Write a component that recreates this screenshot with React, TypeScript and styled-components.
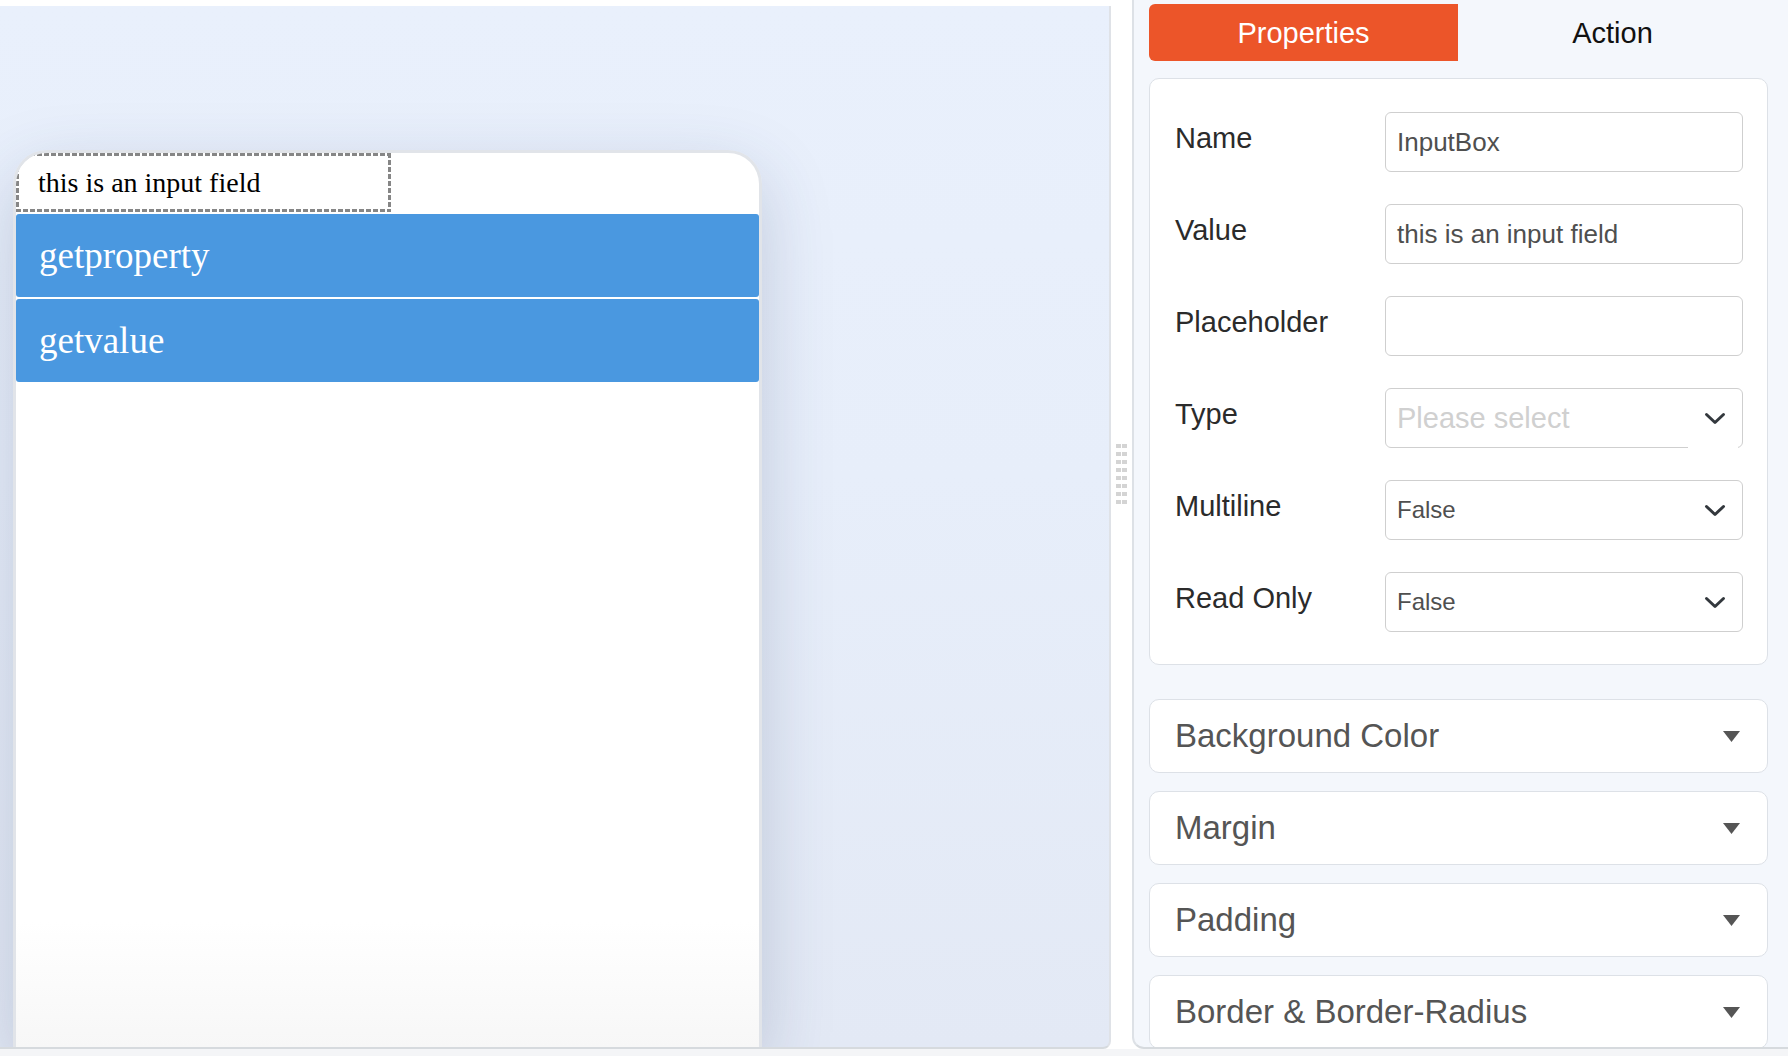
import React from "react";
import styled, { createGlobalStyle } from "styled-components";

const Global = createGlobalStyle`
  html, body { margin: 0; padding: 0; background: #fff; }
  body { font-family: "Liberation Sans", Arial, sans-serif; }
  * { box-sizing: border-box; }
`;

const Page = styled.div`
  width: 1788px;
  height: 1056px;
  display: flex;
  flex-direction: column;
  background: #f4f5f7;
  overflow: hidden;
`;

const Main = styled.div`
  display: flex;
  height: 1049px;
  background: #fff;
`;

const Canvas = styled.div`
  width: 1111px;
  margin-top: 6px;
  height: 1043px;
  background: linear-gradient(180deg, #e9f0fc 0%, #e7eefa 45%, #e3e9f5 100%);
  border-right: 2px solid #dfe2e7;
  border-bottom: 2px solid #d6dade;
  border-bottom-right-radius: 8px;
  padding: 144px 0 0 13px;
  display: flex;
  overflow: hidden;
`;

const Phone = styled.div`
  width: 749px;
  display: flex;
  flex-direction: column;
  border: 3px solid #e1e4e9;
  border-bottom: none;
  border-radius: 34px 34px 0 0;
  background: linear-gradient(180deg, #ffffff 0%, #ffffff 86%, #f7f7f7 100%);
  box-shadow: 0 24px 70px rgba(50, 70, 110, 0.22);
  overflow: hidden;
`;

const dash = (dir: string) =>
  `repeating-linear-gradient(${dir}, #868686 0 5px, transparent 5px 7px)`;

const FieldPreview = styled.div`
  width: 375px;
  height: 59px;
  padding-left: 22px;
  display: flex;
  align-items: center;
  font-family: "Liberation Serif", "Times New Roman", serif;
  font-size: 28px;
  color: #000;
  background:
    ${dash("90deg")} top / 100% 3px no-repeat,
    ${dash("90deg")} bottom / 100% 3px no-repeat,
    ${dash("180deg")} left / 3px 100% no-repeat,
    ${dash("180deg")} right / 3px 100% no-repeat,
    #fff;
`;

const ActionBar = styled.div`
  height: 83px;
  margin-top: 2px;
  background: #4a98e0;
  border-radius: 3px;
  padding-left: 23px;
  display: flex;
  align-items: center;
  font-family: "Liberation Serif", "Times New Roman", serif;
  font-size: 37px;
  color: #fff;
`;

const Gutter = styled.div`
  width: 21px;
  display: flex;
  justify-content: center;
  padding-top: 444px;
`;

const Handle = styled.div`
  display: grid;
  grid-template-columns: 5px 5px;
  grid-auto-rows: 4px;
  column-gap: 1px;
  row-gap: 4px;
  height: max-content;
`;

const Dot = styled.span`
  display: block;
  background: #d4d4d4;
`;

const Panel = styled.div`
  flex: 1;
  height: 1049px;
  background: #f4f7fc;
  border-left: 2px solid #dde1e6;
  border-bottom: 2px solid #d6dade;
  border-bottom-left-radius: 12px;
  padding: 4px 20px 0 15px;
  overflow: hidden;
`;

const Tabs = styled.div`
  display: flex;
  height: 57px;
`;

const Tab = styled.div<{ $active?: boolean }>`
  width: 309px;
  display: flex;
  align-items: center;
  justify-content: center;
  font-size: 29px;
  padding-top: 2px;
  color: ${(p) => (p.$active ? "#fff" : "#111")};
  background: ${(p) => (p.$active ? "#ec5529" : "transparent")};
  border-radius: 6px 0 0 6px;
`;

const Card = styled.div`
  margin-top: 17px;
  background: #fff;
  border: 1px solid #dde1e7;
  border-radius: 10px;
  padding: 33px 24px 32px 25px;
  display: flex;
  flex-direction: column;
  gap: 32px;
`;

const Row = styled.div`
  display: grid;
  grid-template-columns: 1fr 358px;
  align-items: start;
`;

const Label = styled.div`
  font-size: 29px;
  line-height: 52px;
  color: #2b2b2b;
`;

const Field = styled.div<{ $placeholder?: boolean; $size?: number; $gapEdge?: boolean }>`
  position: relative;
  height: 60px;
  border: 1px solid #cfcfcf;
  border-radius: 6px;
  padding: 0 16px 0 11px;
  display: flex;
  align-items: center;
  justify-content: space-between;
  font-size: ${(p) => p.$size ?? 26}px;
  color: ${(p) => (p.$placeholder ? "#d0d0d0" : "#4f4f4f")};
  background: #fff;
  ${(p) =>
    p.$gapEdge
      ? `&::after { content: ""; position: absolute; right: 4px; bottom: -1px; width: 50px; height: 2px; background: #fff; }`
      : ""}
`;

const SelectValue = styled.span``;

const Chevron = () => (
  <svg width="22" height="13" viewBox="0 0 22 13" fill="none">
    <polyline points="2.5,2.5 11,10.5 19.5,2.5" stroke="#33383d" strokeWidth="3" strokeLinecap="round" strokeLinejoin="round" />
  </svg>
);

const Sections = styled.div`
  margin-top: 34px;
  display: flex;
  flex-direction: column;
  gap: 18px;
`;

const Section = styled.div`
  height: 74px;
  flex-shrink: 0;
  background: #fff;
  border: 1px solid #dde1e7;
  border-radius: 10px;
  padding: 0 27px 0 25px;
  display: flex;
  align-items: center;
  justify-content: space-between;
  font-size: 33px;
  color: #555;
`;

const Caret = () => (
  <svg width="17" height="11" viewBox="0 0 17 11">
    <polygon points="0,0 17,0 8.5,11" fill="#555" />
  </svg>
);

const Footer = styled.div`
  height: 7px;
  background: #f4f5f7;
`;

type Prop = { label: string; value: string; kind: "text" | "select"; placeholder?: boolean; gap?: boolean };

const props: Prop[] = [
  { label: "Name", value: "InputBox", kind: "text" },
  { label: "Value", value: "this is an input field", kind: "text" },
  { label: "Placeholder", value: "", kind: "text" },
  { label: "Type", value: "Please select", kind: "select", placeholder: true, gap: true },
  { label: "Multiline", value: "False", kind: "select" },
  { label: "Read Only", value: "False", kind: "select" },
];

const sections = ["Background Color", "Margin", "Padding", "Border & Border-Radius"];

export default function App() {
  return (
    <Page>
      <Global />
      <Main>
        <Canvas>
          <Phone>
            <FieldPreview>this is an input field</FieldPreview>
            <ActionBar>getproperty</ActionBar>
            <ActionBar>getvalue</ActionBar>
          </Phone>
        </Canvas>
        <Gutter>
          <Handle>
            {Array.from({ length: 16 }).map((_, i) => (
              <Dot key={i} />
            ))}
          </Handle>
        </Gutter>
        <Panel>
          <Tabs>
            <Tab $active>Properties</Tab>
            <Tab>Action</Tab>
          </Tabs>
          <Card>
            {props.map((p) => (
              <Row key={p.label}>
                <Label>{p.label}</Label>
                {p.kind === "text" ? (
                  <Field>{p.value}</Field>
                ) : (
                  <Field $placeholder={p.placeholder} $size={p.placeholder ? 29 : 24} $gapEdge={p.gap}>
                    <SelectValue>{p.value}</SelectValue>
                    <Chevron />
                  </Field>
                )}
              </Row>
            ))}
          </Card>
          <Sections>
            {sections.map((s) => (
              <Section key={s}>
                {s}
                <Caret />
              </Section>
            ))}
          </Sections>
        </Panel>
      </Main>
      <Footer />
    </Page>
  );
}
